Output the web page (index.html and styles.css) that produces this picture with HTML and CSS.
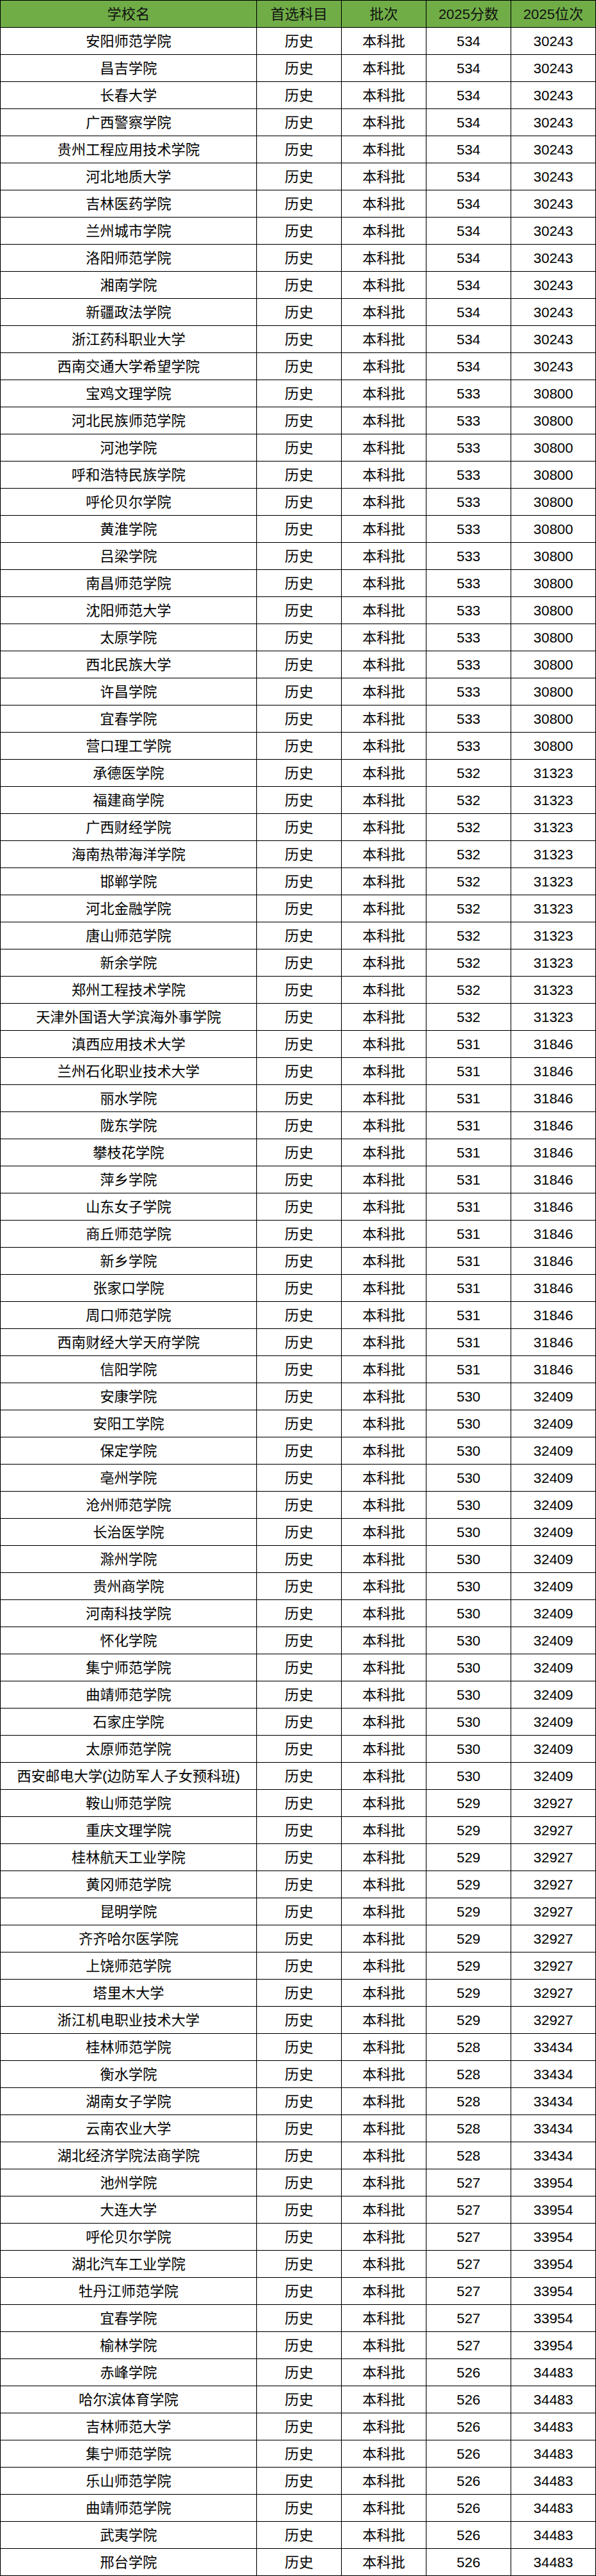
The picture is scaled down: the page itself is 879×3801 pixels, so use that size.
FILE: index.html
```html
<!DOCTYPE html>
<html lang="zh-CN">
<head>
<meta charset="utf-8">
<title>2025 历史类本科批</title>
<link rel="stylesheet" href="styles.css">
</head>
<body>
<table class="score-table">
<colgroup>
<col class="c-name"><col class="c-sub"><col class="c-batch"><col class="c-score"><col class="c-rank">
</colgroup>
<thead>
<tr><th>学校名</th><th>首选科目</th><th>批次</th><th>2025分数</th><th>2025位次</th></tr>
</thead>
<tbody>
<tr><td>安阳师范学院</td><td>历史</td><td>本科批</td><td>534</td><td>30243</td></tr>
<tr><td>昌吉学院</td><td>历史</td><td>本科批</td><td>534</td><td>30243</td></tr>
<tr><td>长春大学</td><td>历史</td><td>本科批</td><td>534</td><td>30243</td></tr>
<tr><td>广西警察学院</td><td>历史</td><td>本科批</td><td>534</td><td>30243</td></tr>
<tr><td>贵州工程应用技术学院</td><td>历史</td><td>本科批</td><td>534</td><td>30243</td></tr>
<tr><td>河北地质大学</td><td>历史</td><td>本科批</td><td>534</td><td>30243</td></tr>
<tr><td>吉林医药学院</td><td>历史</td><td>本科批</td><td>534</td><td>30243</td></tr>
<tr><td>兰州城市学院</td><td>历史</td><td>本科批</td><td>534</td><td>30243</td></tr>
<tr><td>洛阳师范学院</td><td>历史</td><td>本科批</td><td>534</td><td>30243</td></tr>
<tr><td>湘南学院</td><td>历史</td><td>本科批</td><td>534</td><td>30243</td></tr>
<tr><td>新疆政法学院</td><td>历史</td><td>本科批</td><td>534</td><td>30243</td></tr>
<tr><td>浙江药科职业大学</td><td>历史</td><td>本科批</td><td>534</td><td>30243</td></tr>
<tr><td>西南交通大学希望学院</td><td>历史</td><td>本科批</td><td>534</td><td>30243</td></tr>
<tr><td>宝鸡文理学院</td><td>历史</td><td>本科批</td><td>533</td><td>30800</td></tr>
<tr><td>河北民族师范学院</td><td>历史</td><td>本科批</td><td>533</td><td>30800</td></tr>
<tr><td>河池学院</td><td>历史</td><td>本科批</td><td>533</td><td>30800</td></tr>
<tr><td>呼和浩特民族学院</td><td>历史</td><td>本科批</td><td>533</td><td>30800</td></tr>
<tr><td>呼伦贝尔学院</td><td>历史</td><td>本科批</td><td>533</td><td>30800</td></tr>
<tr><td>黄淮学院</td><td>历史</td><td>本科批</td><td>533</td><td>30800</td></tr>
<tr><td>吕梁学院</td><td>历史</td><td>本科批</td><td>533</td><td>30800</td></tr>
<tr><td>南昌师范学院</td><td>历史</td><td>本科批</td><td>533</td><td>30800</td></tr>
<tr><td>沈阳师范大学</td><td>历史</td><td>本科批</td><td>533</td><td>30800</td></tr>
<tr><td>太原学院</td><td>历史</td><td>本科批</td><td>533</td><td>30800</td></tr>
<tr><td>西北民族大学</td><td>历史</td><td>本科批</td><td>533</td><td>30800</td></tr>
<tr><td>许昌学院</td><td>历史</td><td>本科批</td><td>533</td><td>30800</td></tr>
<tr><td>宜春学院</td><td>历史</td><td>本科批</td><td>533</td><td>30800</td></tr>
<tr><td>营口理工学院</td><td>历史</td><td>本科批</td><td>533</td><td>30800</td></tr>
<tr><td>承德医学院</td><td>历史</td><td>本科批</td><td>532</td><td>31323</td></tr>
<tr><td>福建商学院</td><td>历史</td><td>本科批</td><td>532</td><td>31323</td></tr>
<tr><td>广西财经学院</td><td>历史</td><td>本科批</td><td>532</td><td>31323</td></tr>
<tr><td>海南热带海洋学院</td><td>历史</td><td>本科批</td><td>532</td><td>31323</td></tr>
<tr><td>邯郸学院</td><td>历史</td><td>本科批</td><td>532</td><td>31323</td></tr>
<tr><td>河北金融学院</td><td>历史</td><td>本科批</td><td>532</td><td>31323</td></tr>
<tr><td>唐山师范学院</td><td>历史</td><td>本科批</td><td>532</td><td>31323</td></tr>
<tr><td>新余学院</td><td>历史</td><td>本科批</td><td>532</td><td>31323</td></tr>
<tr><td>郑州工程技术学院</td><td>历史</td><td>本科批</td><td>532</td><td>31323</td></tr>
<tr><td>天津外国语大学滨海外事学院</td><td>历史</td><td>本科批</td><td>532</td><td>31323</td></tr>
<tr><td>滇西应用技术大学</td><td>历史</td><td>本科批</td><td>531</td><td>31846</td></tr>
<tr><td>兰州石化职业技术大学</td><td>历史</td><td>本科批</td><td>531</td><td>31846</td></tr>
<tr><td>丽水学院</td><td>历史</td><td>本科批</td><td>531</td><td>31846</td></tr>
<tr><td>陇东学院</td><td>历史</td><td>本科批</td><td>531</td><td>31846</td></tr>
<tr><td>攀枝花学院</td><td>历史</td><td>本科批</td><td>531</td><td>31846</td></tr>
<tr><td>萍乡学院</td><td>历史</td><td>本科批</td><td>531</td><td>31846</td></tr>
<tr><td>山东女子学院</td><td>历史</td><td>本科批</td><td>531</td><td>31846</td></tr>
<tr><td>商丘师范学院</td><td>历史</td><td>本科批</td><td>531</td><td>31846</td></tr>
<tr><td>新乡学院</td><td>历史</td><td>本科批</td><td>531</td><td>31846</td></tr>
<tr><td>张家口学院</td><td>历史</td><td>本科批</td><td>531</td><td>31846</td></tr>
<tr><td>周口师范学院</td><td>历史</td><td>本科批</td><td>531</td><td>31846</td></tr>
<tr><td>西南财经大学天府学院</td><td>历史</td><td>本科批</td><td>531</td><td>31846</td></tr>
<tr><td>信阳学院</td><td>历史</td><td>本科批</td><td>531</td><td>31846</td></tr>
<tr><td>安康学院</td><td>历史</td><td>本科批</td><td>530</td><td>32409</td></tr>
<tr><td>安阳工学院</td><td>历史</td><td>本科批</td><td>530</td><td>32409</td></tr>
<tr><td>保定学院</td><td>历史</td><td>本科批</td><td>530</td><td>32409</td></tr>
<tr><td>亳州学院</td><td>历史</td><td>本科批</td><td>530</td><td>32409</td></tr>
<tr><td>沧州师范学院</td><td>历史</td><td>本科批</td><td>530</td><td>32409</td></tr>
<tr><td>长治医学院</td><td>历史</td><td>本科批</td><td>530</td><td>32409</td></tr>
<tr><td>滁州学院</td><td>历史</td><td>本科批</td><td>530</td><td>32409</td></tr>
<tr><td>贵州商学院</td><td>历史</td><td>本科批</td><td>530</td><td>32409</td></tr>
<tr><td>河南科技学院</td><td>历史</td><td>本科批</td><td>530</td><td>32409</td></tr>
<tr><td>怀化学院</td><td>历史</td><td>本科批</td><td>530</td><td>32409</td></tr>
<tr><td>集宁师范学院</td><td>历史</td><td>本科批</td><td>530</td><td>32409</td></tr>
<tr><td>曲靖师范学院</td><td>历史</td><td>本科批</td><td>530</td><td>32409</td></tr>
<tr><td>石家庄学院</td><td>历史</td><td>本科批</td><td>530</td><td>32409</td></tr>
<tr><td>太原师范学院</td><td>历史</td><td>本科批</td><td>530</td><td>32409</td></tr>
<tr><td>西安邮电大学(边防军人子女预科班)</td><td>历史</td><td>本科批</td><td>530</td><td>32409</td></tr>
<tr><td>鞍山师范学院</td><td>历史</td><td>本科批</td><td>529</td><td>32927</td></tr>
<tr><td>重庆文理学院</td><td>历史</td><td>本科批</td><td>529</td><td>32927</td></tr>
<tr><td>桂林航天工业学院</td><td>历史</td><td>本科批</td><td>529</td><td>32927</td></tr>
<tr><td>黄冈师范学院</td><td>历史</td><td>本科批</td><td>529</td><td>32927</td></tr>
<tr><td>昆明学院</td><td>历史</td><td>本科批</td><td>529</td><td>32927</td></tr>
<tr><td>齐齐哈尔医学院</td><td>历史</td><td>本科批</td><td>529</td><td>32927</td></tr>
<tr><td>上饶师范学院</td><td>历史</td><td>本科批</td><td>529</td><td>32927</td></tr>
<tr><td>塔里木大学</td><td>历史</td><td>本科批</td><td>529</td><td>32927</td></tr>
<tr><td>浙江机电职业技术大学</td><td>历史</td><td>本科批</td><td>529</td><td>32927</td></tr>
<tr><td>桂林师范学院</td><td>历史</td><td>本科批</td><td>528</td><td>33434</td></tr>
<tr><td>衡水学院</td><td>历史</td><td>本科批</td><td>528</td><td>33434</td></tr>
<tr><td>湖南女子学院</td><td>历史</td><td>本科批</td><td>528</td><td>33434</td></tr>
<tr><td>云南农业大学</td><td>历史</td><td>本科批</td><td>528</td><td>33434</td></tr>
<tr><td>湖北经济学院法商学院</td><td>历史</td><td>本科批</td><td>528</td><td>33434</td></tr>
<tr><td>池州学院</td><td>历史</td><td>本科批</td><td>527</td><td>33954</td></tr>
<tr><td>大连大学</td><td>历史</td><td>本科批</td><td>527</td><td>33954</td></tr>
<tr><td>呼伦贝尔学院</td><td>历史</td><td>本科批</td><td>527</td><td>33954</td></tr>
<tr><td>湖北汽车工业学院</td><td>历史</td><td>本科批</td><td>527</td><td>33954</td></tr>
<tr><td>牡丹江师范学院</td><td>历史</td><td>本科批</td><td>527</td><td>33954</td></tr>
<tr><td>宜春学院</td><td>历史</td><td>本科批</td><td>527</td><td>33954</td></tr>
<tr><td>榆林学院</td><td>历史</td><td>本科批</td><td>527</td><td>33954</td></tr>
<tr><td>赤峰学院</td><td>历史</td><td>本科批</td><td>526</td><td>34483</td></tr>
<tr><td>哈尔滨体育学院</td><td>历史</td><td>本科批</td><td>526</td><td>34483</td></tr>
<tr><td>吉林师范大学</td><td>历史</td><td>本科批</td><td>526</td><td>34483</td></tr>
<tr><td>集宁师范学院</td><td>历史</td><td>本科批</td><td>526</td><td>34483</td></tr>
<tr><td>乐山师范学院</td><td>历史</td><td>本科批</td><td>526</td><td>34483</td></tr>
<tr><td>曲靖师范学院</td><td>历史</td><td>本科批</td><td>526</td><td>34483</td></tr>
<tr><td>武夷学院</td><td>历史</td><td>本科批</td><td>526</td><td>34483</td></tr>
<tr><td>邢台学院</td><td>历史</td><td>本科批</td><td>526</td><td>34483</td></tr>
</tbody>
</table>
</body>
</html>
```

FILE: styles.css
```css
html, body {
  margin: 0;
  padding: 0;
  background: #ffffff;
}

body {
  font-family: "Liberation Sans", "Noto Sans CJK SC", sans-serif;
  color: #000000;
}

.score-table {
  width: 879px;
  table-layout: fixed;
  border-collapse: collapse;
  border: 1px solid #000000;
}

.c-name { width: 378px; }
.c-sub,
.c-batch,
.c-score,
.c-rank { width: 125px; }

.score-table tr {
  height: 40px;
}

.score-table th,
.score-table td {
  border: 1px solid #000000;
  padding: 0;
  text-align: center;
  vertical-align: middle;
  font-size: 21px;
  font-weight: normal;
  line-height: 24px;
  white-space: nowrap;
  overflow: hidden;
}

.score-table thead th {
  background: #70ad47;
  color: #111111;
}
```
